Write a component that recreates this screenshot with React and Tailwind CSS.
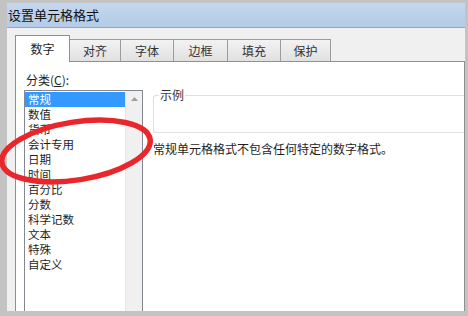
import React from 'react';

const FONT = { fontFamily: '"Noto Sans CJK SC", "Noto Sans", sans-serif' };

const tabs = [
  { label: '数字', w: 'w-[55px]', active: true },
  { label: '对齐', w: 'w-[51px]' },
  { label: '字体', w: 'w-[53px]' },
  { label: '边框', w: 'w-[54px]' },
  { label: '填充', w: 'w-[53px]' },
  { label: '保护', w: 'w-[50px]' },
];

const categories = [
  '常规', '数值', '货币', '会计专用', '日期', '时间',
  '百分比', '分数', '科学记数', '文本', '特殊', '自定义',
];

const App = () => {
  return (
    <div
      className="relative w-[468px] h-[316px] overflow-hidden bg-[#c3c3c3] pt-[3px] pr-[3px] pb-[5px] pl-[7px] text-[12px] text-[#1e1e1e]"
      style={FONT}
    >
      <div className="flex flex-col h-full">
        {/* Title bar */}
        <div className="h-[25px] shrink-0 flex items-center pl-[1px] bg-gradient-to-b from-[#c4d8ee] to-[#b3cbe6] border-b border-[#95a8bf] text-[13px] text-[#111]">
          设置单元格格式
        </div>

        {/* Dialog body */}
        <div className="flex-1 flex flex-col bg-[#f0f0f0] pl-[8px] pt-[6px] min-h-0">
          {/* Tabs */}
          <div className="h-[27px] shrink-0 flex items-end">
            {tabs.map((t) =>
              t.active ? (
                <div
                  key={t.label}
                  className={`${t.w} h-[27px] -mb-[1px] bg-white border border-b-0 border-[#8e9096] flex items-center justify-center pb-[1px] z-10`}
                >
                  {t.label}
                </div>
              ) : (
                <div
                  key={t.label}
                  className={`${t.w} h-[22px] bg-gradient-to-b from-[#f2f2f2] to-[#e1e1e1] border border-l-0 border-b-0 border-[#9a9ca2] flex items-center justify-center text-[#333]`}
                >
                  {t.label}
                </div>
              )
            )}
          </div>

          {/* Tab panel */}
          <div className="flex-1 min-h-0 bg-white border border-b-0 border-[#8e9096] pl-[8px] pt-[10px] flex">
            {/* Category column */}
            <div className="w-[119px] shrink-0 flex flex-col">
              <div className="h-[16px] leading-[16px] pl-[2px]">
                分类(<span className="underline">C</span>):
              </div>
              <div className="mt-[2px] flex-1 flex border border-b-0 border-[#828790] bg-white">
                <div className="flex-1 flex flex-col pt-[1px] text-[11.5px]">
                  {categories.map((c, i) => (
                    <div
                      key={c}
                      className={`h-[15px] leading-[15px] pl-[3px] ${
                        i === 0 ? 'bg-[#3399ff] text-white' : ''
                      }`}
                    >
                      {c}
                    </div>
                  ))}
                </div>
                <div className="w-[17px] bg-[#f0f0f0] border-l border-[#e6e6e6] flex justify-center pt-[6px]">
                  <svg width="7" height="4" viewBox="0 0 7 4">
                    <path d="M0 4 L3.5 0 L7 4 Z" fill="#a0a0a0" />
                  </svg>
                </div>
              </div>
            </div>

            {/* Right side */}
            <div className="flex-1 flex flex-col pl-[10px] pt-[23px]">
              <div className="relative h-[38px] border border-r-0 border-[#dcdfe3] rounded-l-[3px]">
                <span className="absolute -top-[9px] left-[5px] bg-white px-[1px] leading-[16px] text-[#333]">
                  示例
                </span>
              </div>
              <div className="mt-[8px] leading-[16px]">常规单元格格式不包含任何特定的数字格式。</div>
            </div>
          </div>
        </div>
      </div>

      {/* Red annotation */}
      <svg className="absolute left-0 top-0 pointer-events-none" width="468" height="316">
        <ellipse
          cx="76"
          cy="151"
          rx="75"
          ry="29"
          transform="rotate(-9 76 151)"
          fill="none"
          stroke="#e8262b"
          strokeWidth="5.5"
        />
      </svg>
    </div>
  );
};

export default App;
